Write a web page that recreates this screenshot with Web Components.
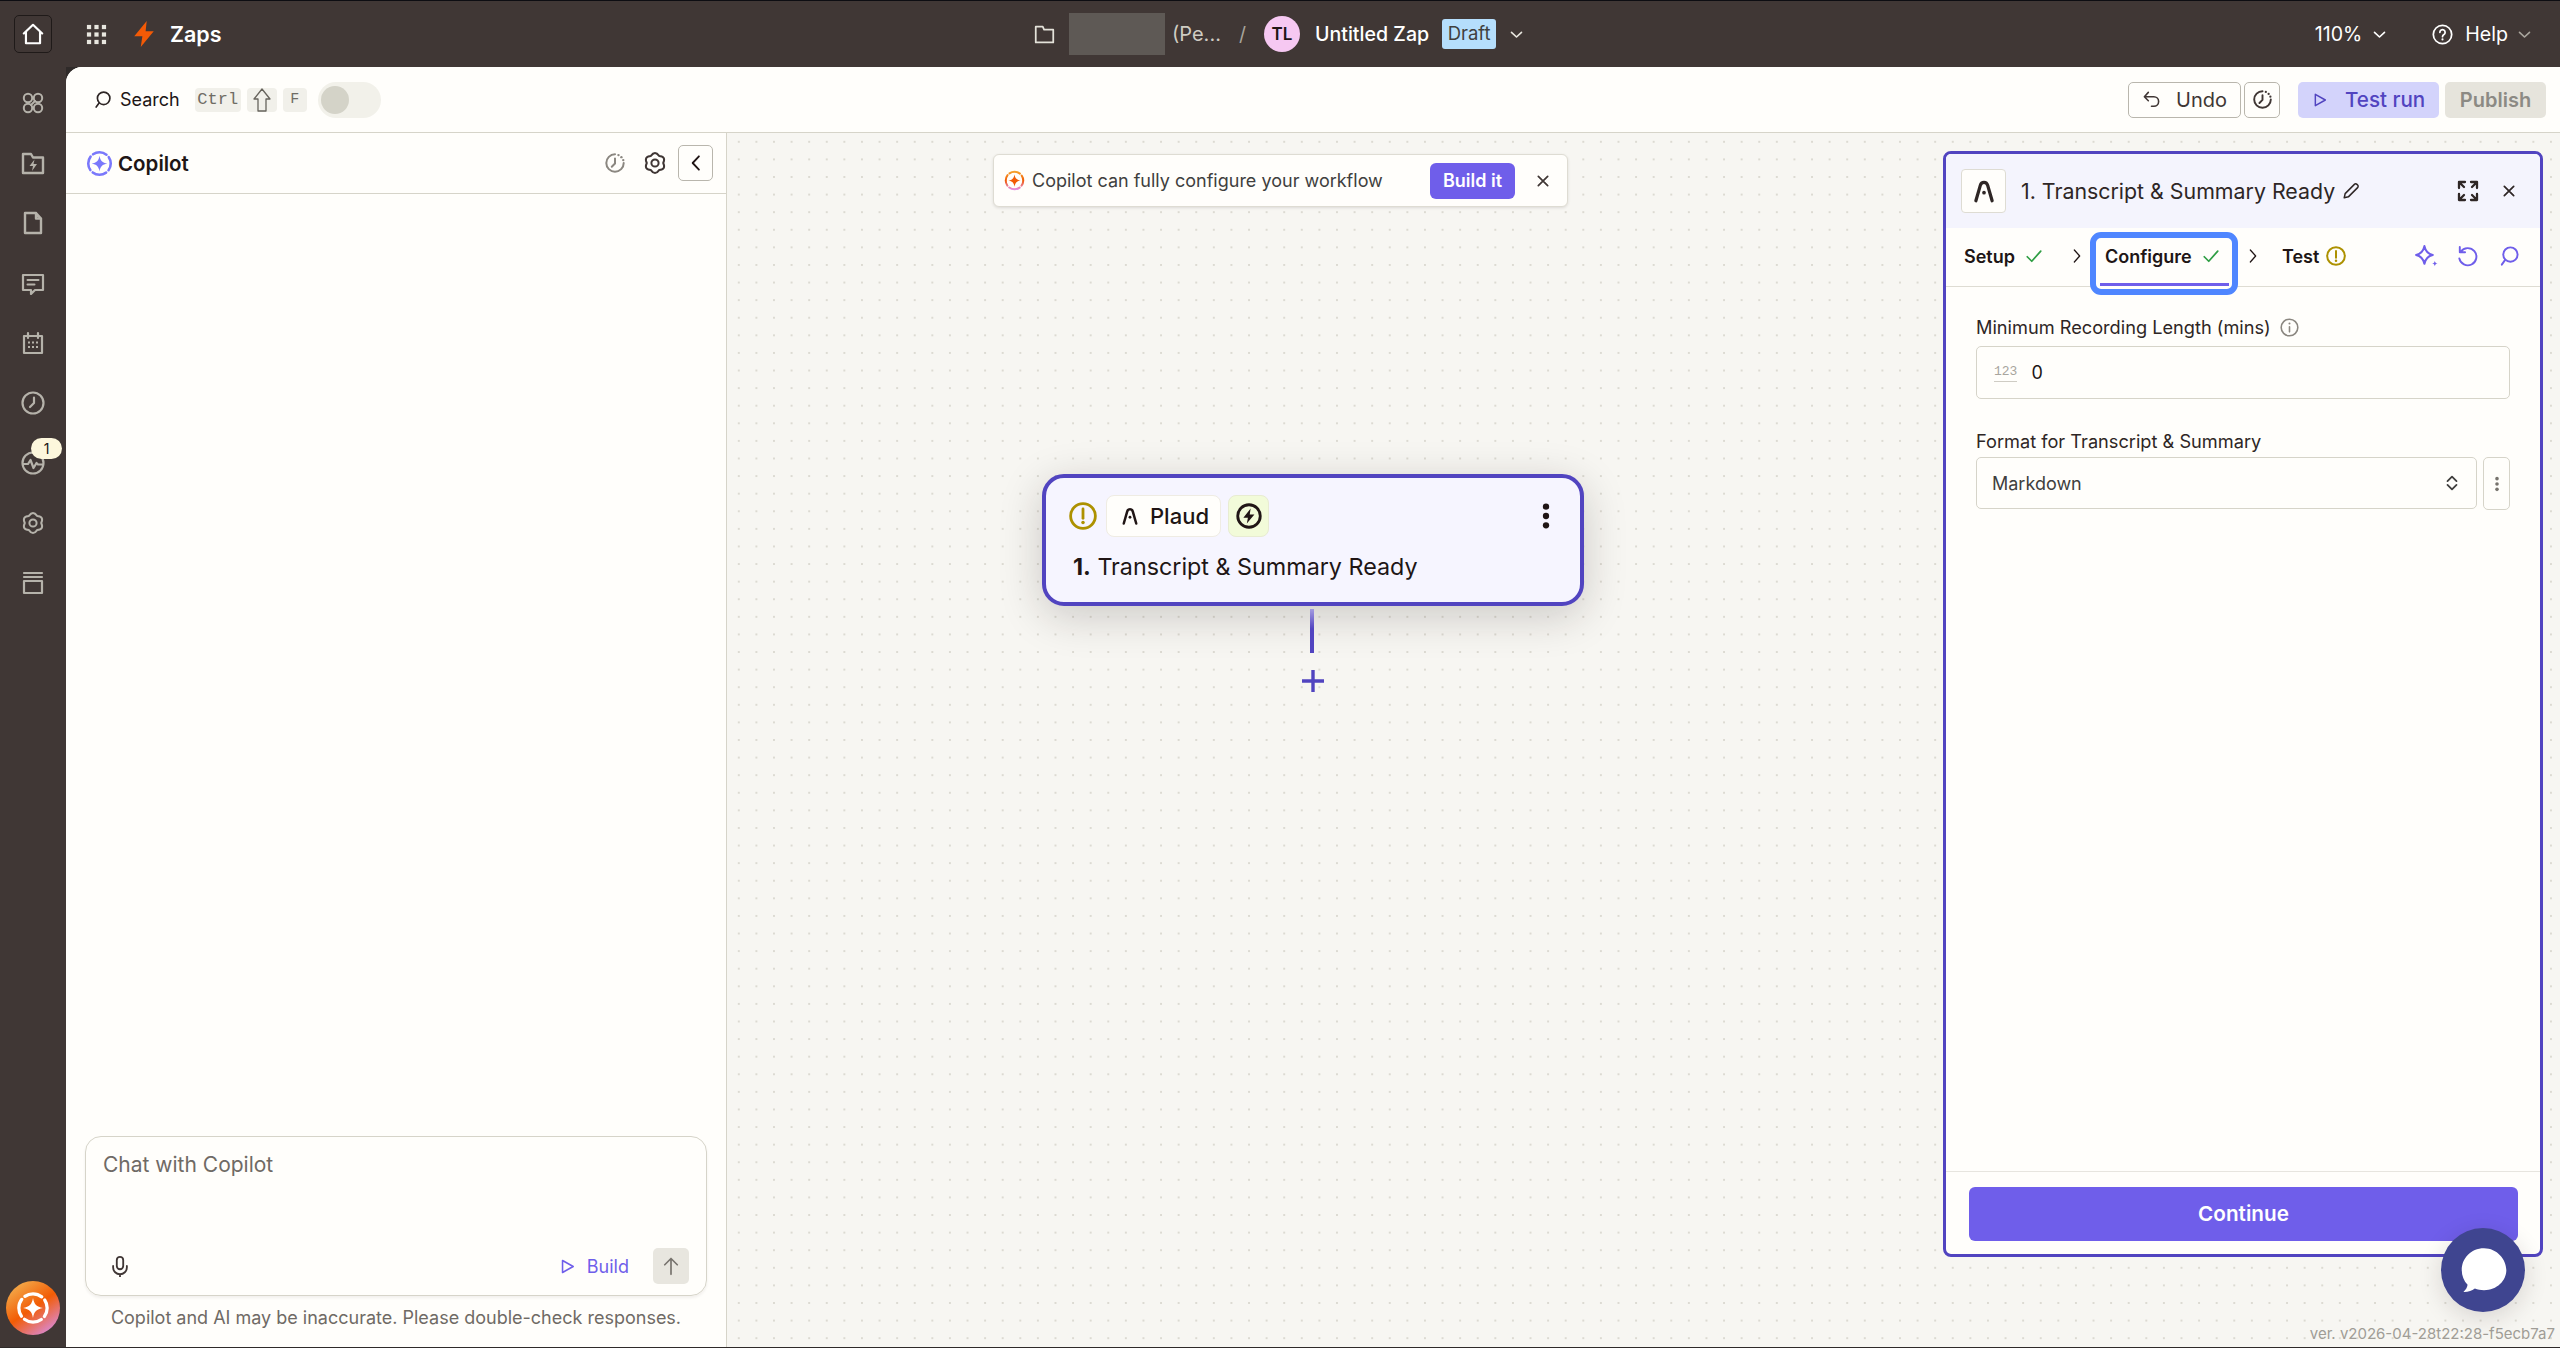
<!DOCTYPE html>
<html lang="en">
<head>
<meta charset="utf-8">
<title>Untitled Zap</title>
<style>
    html, body { margin: 0; height: 1348px; background: #2f2a29; overflow: hidden; }
    body { font-family: Inter, "Liberation Sans", sans-serif; color: #201515; }
</style>
</head>
<body>
<zap-app>
    <zap-topbar slot="top"></zap-topbar>
    <zap-rail slot="rail"></zap-rail>
    <zap-toolbar slot="toolbar"></zap-toolbar>
    <copilot-panel slot="copilot"></copilot-panel>
    <zap-canvas slot="canvas">
        <step-panel></step-panel>
    </zap-canvas>
</zap-app>

<script>
const ICONS = {
    home: '<path d="M3.5 11.5 12 3.5l8.5 8M5.5 10v10.5h13V10" stroke-width="2"/>',
    apps: '<g fill="currentColor" stroke="none"><rect x="2" y="2" width="4.4" height="4.4"/><rect x="9.8" y="2" width="4.4" height="4.4"/><rect x="17.6" y="2" width="4.4" height="4.4"/><rect x="2" y="9.8" width="4.4" height="4.4"/><rect x="9.8" y="9.8" width="4.4" height="4.4"/><rect x="17.6" y="9.8" width="4.4" height="4.4"/><rect x="2" y="17.6" width="4.4" height="4.4"/><rect x="9.8" y="17.6" width="4.4" height="4.4"/><rect x="17.6" y="17.6" width="4.4" height="4.4"/></g>',
    bolt: '<path d="M14.5 0 3 14h7.5L9 24l12-14.5h-7.5z" fill="#f25a06" stroke="none"/>',
    nodes: '<circle cx="7" cy="7" r="4.2"/><circle cx="17" cy="7" r="4.2"/><circle cx="7" cy="17" r="4.2"/><circle cx="17" cy="17" r="4.2"/><path d="M10 14 14 10"/>',
    zapfolder: '<path d="M2 22V3h8l2 3.5h10V22z" stroke-width="2.4"/><path d="M13.5 8.5 8.5 15H12l-1 5 5-7h-3.5z" fill="currentColor" stroke="none"/>',
    doc: '<path d="M4 2h11l5 5.5V22H4zM15 2v5.500h5" stroke-width="2.4"/>',
    chat: '<path d="M2 4h20v15h-8l-4 4v-4H2z" stroke-width="2.2"/><path d="M6.5 9h11M6.5 13.5h7"/>',
    calendar: '<path d="M3 5h18v17H3zM7 2v5M17 2v5" stroke-width="2.2"/><g fill="currentColor" stroke="none"><rect x="7" y="10.5" width="2" height="2"/><rect x="11" y="10.5" width="2" height="2"/><rect x="15" y="10.5" width="2" height="2"/><rect x="7" y="15" width="2" height="2"/><rect x="11" y="15" width="2" height="2"/><rect x="15" y="15" width="2" height="2"/></g>',
    clock: '<circle cx="12" cy="12" r="10.5" stroke-width="2.2"/><path d="M13 6.5V12l-4 4" stroke-width="2.2"/>',
    activity: '<circle cx="12" cy="12" r="10.5" stroke-width="2.2"/><path d="M2 13h5l2.5-4 3 8 3-5 1.5 1.5H22" stroke-width="2.2"/>',
    gear: '<path d="M7.9 4.9Q12 -1 16.1 4.9Q23.3 5.5 20.2 12Q23.3 18.5 16.1 19.1Q12 25 7.9 19.1Q.7 18.5 3.8 12Q.7 5.5 7.9 4.9z" stroke-width="2"/><circle cx="12" cy="12" r="3.6" stroke-width="2"/>',
    stack: '<path d="M3 22V10h18v12zM3 2h18M3 6h18" stroke-width="2.2"/>',
    folder: '<path d="M2 21V3h8l1.5 3.5H22V21z M2 21h20" stroke-width="2"/>',
    search: '<circle cx="14" cy="10" r="7.5"/><path d="M8.5 15.5 5 20.5"/>',
    up: '<path d="M12 1 20 11h-4v12H8V11H4z" stroke-width="1.3"/>',
    chevdown: '<path d="M4 8.500 12 16l8-7.500" stroke-width="2.6"/>',
    chevright: '<path d="M8 3l8 9-8 9" stroke-width="1.9"/>',
    chevleft: '<path d="M15.5 4 8 12l7.5 8" stroke-width="2.2"/>',
    help: '<circle cx="12" cy="12" r="10.5"/><path d="M9 9.5a3 3 0 1 1 4.6 2.6c-1 .6-1.6 1.2-1.6 2.4"/><circle cx="12" cy="17.6" r="1.2" fill="currentColor" stroke="none"/>',
    undo: '<path d="M8 3 3 8.5l5 5M3.5 8.5H15a6 6 0 0 1 0 12h-3"/>',
    history: '<path d="M12 2.5a9.5 9.5 0 1 0 9.5 9.5" stroke-width="2.2"/><path d="M12 7v5.5l-3.5 3.5" stroke-width="2.2"/><g fill="currentColor" stroke="none"><circle cx="15.8" cy="3.4" r="1.3"/><circle cx="19" cy="5.6" r="1.3"/><circle cx="21" cy="8.8" r="1.3"/></g>',
    play: '<path d="M5 3.5 20 12 5 20.5z" stroke-width="2.2"/>',
    mic: '<rect x="8.5" y="2" width="7" height="13.5" rx="3.5"/><path d="M4.5 12v1.5a7.5 7.5 0 0 0 15 0V12M12 21v3"/>',
    arrowup: '<path d="M12 22V3M4.5 10.5 12 3l7.5 7.5"/>',
    close: '<path d="M4 4l16 16M20 4 4 20" stroke-width="3"/>',
    warn: '<circle cx="12" cy="12" r="10.6" stroke-width="2.4"/><path d="M12 6v8" stroke-width="2.4"/><circle cx="12" cy="17.6" r="1.5" fill="currentColor" stroke="none"/>',
    plaud: '<path d="M4.5 21 8.6 6.8C9.1 5 10.3 4 12 4s2.9 1 3.4 2.8L19.5 21" stroke-width="3"/><circle cx="12" cy="13.5" r="1.7" fill="currentColor" stroke="none"/>',
    zapcircle: '<circle cx="12" cy="12" r="10.4" stroke-width="2.6"/><path d="M13.5 5 6.8 13.5H11L10 19l7-8.500h-4.300z" fill="currentColor" stroke="none"/>',
    kebab: '<g fill="currentColor" stroke="none"><circle cx="12" cy="4" r="2.7"/><circle cx="12" cy="12" r="2.7"/><circle cx="12" cy="20" r="2.7"/></g>',
    plus: '<path d="M12 1v22M1 12h22" stroke-width="3.4" stroke-linecap="butt"/>',
    pencil: '<path d="M3 21l1.2-5.5L16.5 3.2a2.4 2.4 0 0 1 3.4 0l.9.9a2.4 2.4 0 0 1 0 3.4L8.5 19.8z"/>',
    expand: '<path d="M3 9V3h6M3 3l5 5M21 9V3h-6M21 3l-5 5M3 15v6h6M3 21l5-5M21 15v6h-6M21 21l-5-5" stroke-width="2.3"/>',
    check: '<path d="M3 13l6 6L21 5.5" stroke-width="2.3"/>',
    sparkle: '<path d="M10 2c1 5 3.5 7.5 8 8.5-4.5 1-7 3.5-8 8.5-1-5-3.5-7.5-8-8.5 4.5-1 7-3.5 8-8.5z"/><path d="M20 16c.3 1.7 1 2.4 2.7 2.7-1.7.3-2.4 1-2.7 2.7-.3-1.7-1-2.4-2.7-2.7 1.7-.3 2.4-1 2.7-2.7z" fill="currentColor" stroke="none"/>',
    refresh: '<path d="M6 7a9 9 0 1 1-1.5 7M5 2v5.500h5.500"/>',
    info: '<circle cx="12" cy="12" r="10.5"/><path d="M12 11v6.5"/><circle cx="12" cy="7" r="1.3" fill="currentColor" stroke="none"/>',
    updown: '<path d="M6 9.5 12 3.5l6 6M6 14.5l6 6 6-6" stroke-width="2.4"/>',
    bubble: '<path d="M12.5 1.5C6 1.5 1.8 6.5 1.8 12c0 2.8 1 5.2 2.800 7.100-.2 1.400-.9 2.500-2 3.400 2.100.1 4-.5 5.500-1.600 1.300.5 2.800.8 4.400.8 6.200 0 10.700-4.600 10.700-9.700S18.700 1.500 12.500 1.500z" fill="currentColor" stroke="none"/>',
    ring: '<circle cx="12" cy="12" r="10" stroke-width="2.3" stroke-dasharray="12.7 3" stroke-dashoffset="6.35"/><path d="M12 5c.8 4.500 2.500 6.200 7 7-4.500.8-6.200 2.500-7 7-.8-4.500-2.500-6.200-7-7 4.500-.8 6.200-2.500 7-7z" fill="currentColor" stroke="none"/>',
    ringc: '<defs><linearGradient id="rg" x1="0" y1="0" x2="0" y2="1"><stop offset="0" stop-color="#f5a02c"/><stop offset=".5" stop-color="#f25c05"/><stop offset="1" stop-color="#e48adf"/></linearGradient></defs><circle cx="12" cy="12" r="10" stroke="url(#rg)" stroke-width="2.3" stroke-dasharray="12.7 3" stroke-dashoffset="6.35"/><path d="M12 5c.8 4.500 2.500 6.200 7 7-4.500.8-6.200 2.500-7 7-.8-4.500-2.500-6.200-7-7 4.500-.8 6.200-2.500 7-7z" fill="#f25c05" stroke="none"/>'
};

class ZIcon extends HTMLElement {
    connectedCallback() {
        const size = this.getAttribute('size') || 24;
        const name = this.getAttribute('name');
        this.attachShadow({ mode: 'open' });
        this.shadowRoot.innerHTML = `
            <style>
                :host { display: inline-flex; flex: none; line-height: 0; }
            </style>
            <svg width="${size}" height="${size}" viewBox="0 0 24 24" fill="none" stroke="currentColor" stroke-width="2" stroke-linecap="round" stroke-linejoin="round">${ICONS[name]}</svg>
        `;
    }
}
customElements.define('z-icon', ZIcon);

class ZapApp extends HTMLElement {
    constructor() {
        super();
        this.attachShadow({ mode: 'open' });
        this.shadowRoot.innerHTML = `
            <style>
                :host {
                    display: grid;
                    grid-template-columns: 66px 1fr;
                    grid-template-rows: 67px 1fr;
                    width: 2560px;
                    height: 1348px;
                    box-sizing: border-box;
                    padding-bottom: 1px;
                    position: relative;
                }
                .top { grid-column: 1 / 3; }
                .main {
                    display: grid;
                    grid-template-rows: 66px 1fr;
                    grid-template-columns: 661px 1fr;
                    background: #fffefb;
                    border-top-left-radius: 16px;
                    overflow: hidden;
                    min-height: 0;
                }
                .bar { grid-column: 1 / 3; }
                .launcher {
                    position: absolute;
                    left: 2441px;
                    top: 1228px;
                    width: 84px;
                    height: 84px;
                    border-radius: 50%;
                    background: #3f4590;
                    color: #fff;
                    display: flex;
                    align-items: center;
                    justify-content: center;
                    box-shadow: 0 6px 24px rgba(32, 21, 21, .14);
                }
                .ver {
                    position: absolute;
                    right: 5px;
                    bottom: 5px;
                    font-size: 15px;
                    color: #a09d96;
                }
            </style>
            <div class="top"><slot name="top"></slot></div>
            <slot name="rail"></slot>
            <div class="main">
                <div class="bar"><slot name="toolbar"></slot></div>
                <slot name="copilot"></slot>
                <slot name="canvas"></slot>
            </div>
            <div class="launcher"><z-icon name="bubble" size="50"></z-icon></div>
            <div class="ver">ver. v2026-04-28t22:28-f5ecb7a7</div>
        `;
    }
}

class ZapTopbar extends HTMLElement {
    constructor() {
        super();
        this.attachShadow({ mode: 'open' });
        this.shadowRoot.innerHTML = `
            <style>
                :host {
                    display: grid;
                    grid-template-columns: 1034px auto 1fr;
                    align-items: center;
                    height: 67px;
                    box-sizing: border-box;
                    border-top: 1px solid #0d0d12;
                    background: #403735;
                    color: #fff;
                    font-size: 19.6px;
                    font-weight: 500;
                }
                .left, .mid, .right { display: flex; align-items: center; }
                .homebox {
                    margin-left: 14px;
                    width: 38px;
                    height: 38px;
                    box-sizing: border-box;
                    border: 1px solid #1f1a19;
                    border-radius: 5px;
                    display: flex;
                    align-items: center;
                    justify-content: center;
                }
                .apps { margin-left: 33px; }
                .bolt { margin-left: 23px; }
                .zaps { margin-left: 13px; font-size: 21.5px; font-weight: 600; }
                .mid z-icon.folder { color: #e4e2da; }
                .redact { margin-left: 14px; width: 96px; height: 42px; background: #5e5955; }
                .pe { margin-left: 7px; color: #cfccc3; font-weight: 400; font-size: 20px; }
                .slash { margin-left: 18px; color: #a8a49c; font-weight: 400; }
                .avatar {
                    margin-left: 18px;
                    width: 36px;
                    height: 36px;
                    border-radius: 50%;
                    background: #f6c8f2;
                    color: #201515;
                    font-size: 17px;
                    font-weight: 600;
                    display: flex;
                    align-items: center;
                    justify-content: center;
                }
                .name { margin-left: 15px; }
                .draft {
                    margin-left: 13px;
                    padding: 0 5.5px;
                    height: 30px;
                    line-height: 28px;
                    border-radius: 3px;
                    background: #b5defc;
                    color: #403f3e;
                    font-size: 18.5px;
                    font-weight: 400;
                }
                .chev { margin-left: 13px; color: #e9e7df; }
                .right { justify-content: flex-end; padding-right: 28px; }
                .zoom { font-weight: 400; }
                .dim { color: #a9a69e; }
            </style>
            <div class="left">
                <div class="homebox"><z-icon name="home" size="26"></z-icon></div>
                <z-icon class="apps" name="apps" size="23" style="color:#e8e6df"></z-icon>
                <z-icon class="bolt" name="bolt" size="26"></z-icon>
                <span class="zaps">Zaps</span>
            </div>
            <div class="mid">
                <z-icon class="folder" name="folder" size="21"></z-icon>
                <div class="redact"></div>
                <span class="pe">(Pe...</span>
                <span class="slash">/</span>
                <div class="avatar">TL</div>
                <span class="name">Untitled Zap</span>
                <span class="draft">Draft</span>
                <z-icon class="chev" name="chevdown" size="15"></z-icon>
            </div>
            <div class="right">
                <span class="zoom">110%</span>
                <z-icon style="margin-left:10px" name="chevdown" size="15"></z-icon>
                <z-icon style="margin-left:45px" name="help" size="21"></z-icon>
                <span class="zoom" style="margin-left:12px">Help</span>
                <z-icon class="dim" style="margin-left:9px" name="chevdown" size="15"></z-icon>
            </div>
        `;
    }
}

class ZapRail extends HTMLElement {
    constructor() {
        super();
        this.attachShadow({ mode: 'open' });
        const names = ['nodes', 'zapfolder', 'doc', 'chat', 'calendar', 'clock', 'activity', 'gear', 'stack'];
        this.shadowRoot.innerHTML = `
            <style>
                :host {
                    display: flex;
                    flex-direction: column;
                    align-items: center;
                    gap: 36px;
                    padding-top: 24px;
                    padding-bottom: 12px;
                    box-sizing: border-box;
                    background: #403735;
                    color: #b5b2aa;
                    position: relative;
                }
                .badge {
                    position: absolute;
                    left: 31px;
                    top: 371px;
                    width: 31px;
                    height: 21px;
                    border-radius: 11px;
                    background: #fdf7dc;
                    color: #201515;
                    font-size: 14px;
                    line-height: 21px;
                    text-align: center;
                }
                .logo {
                    margin-top: auto;
                    width: 54px;
                    height: 54px;
                    border-radius: 50%;
                    background: linear-gradient(145deg, #f3b04f 8%, #f25c05 50%, #d88ce0 92%);
                    color: #fff;
                    display: flex;
                    align-items: center;
                    justify-content: center;
                }
            </style>
            ${names.map(n => `<z-icon name="${n}"></z-icon>`).join('')}
            <div class="badge">1</div>
            <div class="logo"><z-icon name="ring" size="34"></z-icon></div>
        `;
    }
}

class ZapToolbar extends HTMLElement {
    constructor() {
        super();
        this.attachShadow({ mode: 'open' });
        this.shadowRoot.innerHTML = `
            <style>
                :host {
                    display: flex;
                    align-items: center;
                    height: 66px;
                    box-sizing: border-box;
                    padding: 0 14px 0 26px;
                    border-bottom: 1px solid #d6d4c9;
                    background: #fffefb;
                    font-size: 18px;
                }
                .k {
                    display: inline-flex;
                    align-items: center;
                    justify-content: center;
                    height: 24px;
                    box-sizing: border-box;
                    border-radius: 4px;
                    background: #f1f0ea;
                    color: #6f6c65;
                    font: 17px "Liberation Mono", monospace;
                }
                .toggle {
                    margin-left: 11px;
                    width: 63px;
                    height: 36px;
                    border-radius: 18px;
                    background: #f2f1ea;
                    display: flex;
                    align-items: center;
                    padding-left: 3px;
                    box-sizing: border-box;
                }
                .toggle i { width: 28px; height: 28px; border-radius: 50%; background: #d4d3c8; }
                .right { margin-left: auto; display: flex; align-items: center; }
                .btn {
                    display: flex;
                    align-items: center;
                    height: 36px;
                    box-sizing: border-box;
                    border-radius: 5px;
                    font-size: 20px;
                }
                .undo { width: 113px; border: 1px solid #b9b6ad; padding-left: 13px; gap: 15px; color: #403735; }
                .hist { width: 36px; margin-left: 3px; border: 1px solid #b9b6ad; justify-content: center; color: #403735; }
                .test { width: 141px; margin-left: 18px; padding-left: 14px; gap: 17px; background: #d3d3fb; color: #5144c0; font-weight: 500; font-size: 20.6px; }
                .pub { width: 101px; margin-left: 6px; justify-content: center; background: #e6e4dc; color: #8c8a84; font-weight: 600; }
            </style>
            <z-icon name="search" size="20" style="color:#2e2625"></z-icon>
            <span style="margin-left:8px">Search</span>
            <span class="k" style="margin-left:15px;width:46px">Ctrl</span>
            <span class="k" style="margin-left:6px;width:30px;height:24px;color:#66635c"><z-icon name="up" size="24"></z-icon></span>
            <span class="k" style="margin-left:6px;width:24px;font-size:15px">F</span>
            <div class="toggle"><i></i></div>
            <div class="right">
                <div class="btn undo"><z-icon name="undo" size="19"></z-icon>Undo</div>
                <div class="btn hist"><z-icon name="history" size="21"></z-icon></div>
                <div class="btn test"><z-icon name="play" size="16"></z-icon>Test run</div>
                <div class="btn pub">Publish</div>
            </div>
        `;
    }
}

class CopilotPanel extends HTMLElement {
    constructor() {
        super();
        this.attachShadow({ mode: 'open' });
        this.shadowRoot.innerHTML = `
            <style>
                :host {
                    display: flex;
                    flex-direction: column;
                    box-sizing: border-box;
                    border-right: 1px solid #d6d4c9;
                    background: #fffefb;
                    min-height: 0;
                }
                header {
                    display: flex;
                    align-items: center;
                    height: 61px;
                    box-sizing: border-box;
                    padding: 0 13px 0 20px;
                    border-bottom: 1px solid #d6d4c9;
                    font-size: 20.5px;
                    font-weight: 600;
                }
                header .spark { color: #7a78fb; }
                header .tools { margin-left: auto; display: flex; align-items: center; }
                .collapse {
                    width: 35px;
                    height: 36px;
                    box-sizing: border-box;
                    margin-left: 11px;
                    border: 1px solid #b9b6ad;
                    border-radius: 5px;
                    display: flex;
                    align-items: center;
                    justify-content: center;
                }
                .grow { flex: 1; }
                .box {
                    margin: 0 19px;
                    height: 160px;
                    box-sizing: border-box;
                    padding: 15px 17px 11px 17px;
                    border: 1px solid #d6d4c9;
                    border-radius: 16px;
                    box-shadow: 0 2px 3px rgba(32, 21, 21, .06);
                    display: flex;
                    flex-direction: column;
                }
                .ph { font-size: 21px; line-height: 26px; color: #6f6a65; }
                .row { margin-top: auto; display: flex; align-items: center; }
                .build { margin-left: auto; display: flex; align-items: center; gap: 11px; font-size: 18px; color: #6f5eea; }
                .send {
                    margin-left: 24px;
                    width: 36px;
                    height: 36px;
                    border-radius: 5px;
                    background: #e8e6df;
                    color: #77736d;
                    display: flex;
                    align-items: center;
                    justify-content: center;
                }
                .note {
                    height: 51px;
                    box-sizing: border-box;
                    padding-top: 10px;
                    text-align: center;
                    font-size: 18px;
                    line-height: 24px;
                    color: #6f6a65;
                }
            </style>
            <header>
                <z-icon class="spark" name="ring" size="27"></z-icon>
                <span style="margin-left:5px">Copilot</span>
                <div class="tools">
                    <z-icon name="history" size="22" style="color:#8b8780"></z-icon>
                    <z-icon name="gear" size="24" style="color:#403735;margin-left:17px"></z-icon>
                    <div class="collapse"><z-icon name="chevleft" size="20"></z-icon></div>
                </div>
            </header>
            <div class="grow"></div>
            <div class="box">
                <div class="ph">Chat with Copilot</div>
                <div class="row">
                    <z-icon name="mic" size="22" style="color:#403735;margin-left:6px"></z-icon>
                    <div class="build"><z-icon name="play" size="17"></z-icon>Build</div>
                    <div class="send"><z-icon name="arrowup" size="20"></z-icon></div>
                </div>
            </div>
            <div class="note">Copilot and AI may be inaccurate. Please double-check responses.</div>
        `;
    }
}

class ZapNode extends HTMLElement {
    constructor() {
        super();
        this.attachShadow({ mode: 'open' });
        this.shadowRoot.innerHTML = `
            <style>
                :host {
                    display: block;
                    position: absolute;
                    left: 315px;
                    top: 341px;
                    width: 542px;
                }
                .card {
                    height: 132px;
                    box-sizing: border-box;
                    padding: 17px 20px 0 23px;
                    border: 4px solid #5144c0;
                    border-radius: 22px;
                    background: #f6f5ff;
                    box-shadow: 0 10px 44px rgba(32, 21, 21, .2);
                }
                .top { display: flex; align-items: center; }
                .chip {
                    margin-left: 9px;
                    width: 115px;
                    height: 42px;
                    box-sizing: border-box;
                    padding-left: 13px;
                    gap: 10px;
                    border: 1px solid #efece3;
                    border-radius: 8px;
                    background: #fffefb;
                    font-size: 22px;
                    font-weight: 500;
                    display: flex;
                    align-items: center;
                }
                .trig {
                    margin-left: 7px;
                    width: 41px;
                    height: 42px;
                    box-sizing: border-box;
                    border: 1px solid #e8ecd2;
                    border-radius: 8px;
                    background: #f2fbd9;
                    display: flex;
                    align-items: center;
                    justify-content: center;
                }
                .more { margin-left: auto; }
                .title { margin-top: 16px; margin-left: 4px; font-size: 23.3px; line-height: 28px; white-space: nowrap; }
                .title b { font-weight: 700; }
                .link {
                    position: absolute;
                    left: 268px;
                    top: 135px;
                    width: 4px;
                    height: 44px;
                    background: linear-gradient(#a49ce0, #5144c0 45%);
                }
                .add { position: absolute; left: 259px; top: 195px; color: #5144c0; }
            </style>
            <div class="card">
                <div class="top">
                    <z-icon name="warn" size="28" style="color:#ad9100"></z-icon>
                    <div class="chip"><z-icon name="plaud" size="20"></z-icon>Plaud</div>
                    <div class="trig"><z-icon name="zapcircle" size="26"></z-icon></div>
                    <z-icon class="more" name="kebab" size="28"></z-icon>
                </div>
                <div class="title"><b>1.</b> Transcript &amp; Summary Ready</div>
            </div>
            <div class="link"></div>
            <z-icon class="add" name="plus" size="24"></z-icon>
        `;
    }
}

class ZapCanvas extends HTMLElement {
    constructor() {
        super();
        this.attachShadow({ mode: 'open' });
        this.shadowRoot.innerHTML = `
            <style>
                :host {
                    display: flex;
                    justify-content: flex-end;
                    align-items: flex-start;
                    position: relative;
                    box-sizing: border-box;
                    padding: 18px 17px 0 0;
                    background-color: #f7f6f2;
                    background-image: radial-gradient(circle, #dcdad2 1px, transparent 1.3px);
                    background-size: 17.6px 17.6px;
                    background-position: 3px 0;
                    min-height: 0;
                }
                .banner {
                    position: absolute;
                    left: 266px;
                    top: 21px;
                    width: 575px;
                    height: 53px;
                    box-sizing: border-box;
                    padding-left: 10px;
                    display: flex;
                    align-items: center;
                    border: 1px solid #dedcd3;
                    border-radius: 6px;
                    background: #fffefb;
                    box-shadow: 0 1px 3px rgba(32, 21, 21, .12);
                    font-size: 18px;
                    color: #403f3e;
                }
                .cta {
                    margin-left: auto;
                    width: 85px;
                    height: 36px;
                    border-radius: 6px;
                    background: #6f5eea;
                    color: #fff;
                    font-size: 18px;
                    font-weight: 600;
                    line-height: 36px;
                    text-align: center;
                }
                .x { margin: 0 17px 0 21px; color: #403735; }
            </style>
            <div class="banner">
                <z-icon name="ringc" size="21"></z-icon>
                <span style="margin-left:7px">Copilot can fully configure your workflow</span>
                <div class="cta">Build it</div>
                <z-icon class="x" name="close" size="14"></z-icon>
            </div>
            <zap-node></zap-node>
            <slot></slot>
        `;
    }
}

class StepPanel extends HTMLElement {
    constructor() {
        super();
        this.attachShadow({ mode: 'open' });
        this.shadowRoot.innerHTML = `
            <style>
                :host {
                    display: flex;
                    flex-direction: column;
                    width: 600px;
                    height: 1106px;
                    box-sizing: border-box;
                    border: 3px solid #5144c0;
                    border-radius: 8px;
                    background: #fffefb;
                    overflow: hidden;
                }
                .head {
                    display: flex;
                    align-items: center;
                    height: 74px;
                    flex: none;
                    box-sizing: border-box;
                    padding: 0 24px 0 15px;
                    background: #f4f4fd;
                    font-size: 21.35px;
                    color: #2e2625;
                }
                .logo {
                    width: 45px;
                    height: 44px;
                    box-sizing: border-box;
                    border: 1px solid #dedcd3;
                    border-radius: 4px;
                    background: #fffefb;
                    display: flex;
                    align-items: center;
                    justify-content: center;
                }
                .tabs {
                    display: flex;
                    align-items: center;
                    height: 59px;
                    flex: none;
                    box-sizing: border-box;
                    padding: 0 20px 2px 18px;
                    border-bottom: 1px solid #dedcd3;
                    isolation: isolate;
                    font-size: 18px;
                    font-weight: 600;
                }
                .focus {
                    position: relative;
                    display: flex;
                    align-items: center;
                    width: 129px;
                    height: 56px;
                    box-sizing: border-box;
                    padding-left: 5px;
                }
                .focus::before {
                    content: "";
                    position: absolute;
                    z-index: -1;
                    left: -10px;
                    right: -9px;
                    top: 4px;
                    height: 63px;
                    box-sizing: border-box;
                    border: 6px solid #4f86ff;
                    border-radius: 11px;
                    background: #fffefb;
                }
                .focus::after {
                    content: "";
                    position: absolute;
                    left: 0;
                    right: 0;
                    top: 55px;
                    height: 3px;
                    background: #6f5eea;
                }
                .ok { color: #2f9e44; }
                .tools { margin-left: auto; display: flex; align-items: center; gap: 20px; color: #6f5eea; }
                .body { flex: 1; padding: 28px 30px 0; }
                .lab { font-size: 18.2px; line-height: 24px; color: #2e2625; display: flex; align-items: center; }
                .input {
                    margin-top: 7px;
                    height: 53px;
                    box-sizing: border-box;
                    padding-left: 17px;
                    border: 1px solid #d6d4c9;
                    border-radius: 5px;
                    display: flex;
                    align-items: center;
                    font-size: 18px;
                }
                .n123 {
                    font: 13px "Liberation Mono", monospace;
                    color: #a8a59e;
                    border-bottom: 1px solid #cfccc4;
                    padding-bottom: 2px;
                    margin-right: 14px;
                }
                .selrow { margin-top: 4px; display: flex; gap: 6px; }
                .select {
                    flex: 1;
                    height: 52px;
                    box-sizing: border-box;
                    padding: 0 15px;
                    border: 1px solid #d6d4c9;
                    border-radius: 5px;
                    display: flex;
                    align-items: center;
                    justify-content: space-between;
                    font-size: 18px;
                    color: #403f3e;
                }
                .mini {
                    width: 27px;
                    height: 53px;
                    box-sizing: border-box;
                    border: 1px solid #d6d4c9;
                    border-radius: 5px;
                    display: flex;
                    align-items: center;
                    justify-content: center;
                    color: #77736d;
                }
                .foot { height: 83px; flex: none; box-sizing: border-box; padding: 15px 22px 0 23px; border-top: 1px solid #e7e5df; }
                .go {
                    height: 54px;
                    border-radius: 6px;
                    background: #6f5eea;
                    color: #fff;
                    font-size: 20.7px;
                    font-weight: 600;
                    line-height: 54px;
                    text-align: center;
                }
            </style>
            <div class="head">
                <div class="logo"><z-icon name="plaud" size="26"></z-icon></div>
                <span style="margin-left:15px">1. Transcript &amp; Summary Ready</span>
                <z-icon name="pencil" size="18" style="margin-left:7px"></z-icon>
                <z-icon name="expand" size="24" style="margin-left:auto;margin-right:-2px"></z-icon>
                <z-icon name="close" size="14" style="margin-left:24px"></z-icon>
            </div>
            <div class="tabs">
                <span>Setup</span>
                <z-icon class="ok" name="check" size="18" style="margin-left:10px"></z-icon>
                <z-icon name="chevright" size="16" style="margin-left:26px"></z-icon>
                <div class="focus" style="margin-left:15px">Configure<z-icon class="ok" name="check" size="18" style="margin-left:10px"></z-icon></div>
                <z-icon name="chevright" size="16" style="margin-left:16px"></z-icon>
                <span style="margin-left:21px">Test</span>
                <z-icon name="warn" size="20" style="margin-left:7px;color:#ad9100"></z-icon>
                <div class="tools">
                    <z-icon name="sparkle" size="25" style="margin-right:-4px"></z-icon>
                    <z-icon name="refresh" size="23" style="margin-right:-1px"></z-icon>
                    <z-icon name="search" size="23"></z-icon>
                </div>
            </div>
            <div class="body">
                <div class="lab">Minimum Recording Length (mins)<z-icon name="info" size="19" style="margin-left:9px;color:#8b8780"></z-icon></div>
                <div class="input"><span class="n123">123</span>0</div>
                <div class="lab" style="margin-top:30px">Format for Transcript &amp; Summary</div>
                <div class="selrow">
                    <div class="select">Markdown<z-icon name="updown" size="18"></z-icon></div>
                    <div class="mini"><z-icon name="kebab" size="16"></z-icon></div>
                </div>
            </div>
            <div class="foot"><div class="go">Continue</div></div>
        `;
    }
}

customElements.define('zap-app', ZapApp);
customElements.define('zap-topbar', ZapTopbar);
customElements.define('zap-rail', ZapRail);
customElements.define('zap-toolbar', ZapToolbar);
customElements.define('copilot-panel', CopilotPanel);
customElements.define('zap-node', ZapNode);
customElements.define('zap-canvas', ZapCanvas);
customElements.define('step-panel', StepPanel);
</script>
</body>
</html>
